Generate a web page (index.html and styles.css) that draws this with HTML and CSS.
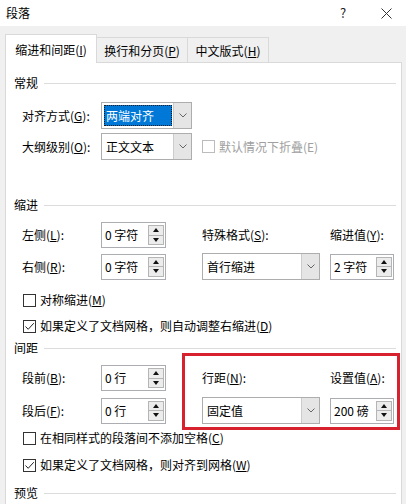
FILE: index.html
```html
<!DOCTYPE html>
<html lang="zh-CN">
<head>
<meta charset="utf-8">
<title>段落</title>
<link rel="stylesheet" href="styles.css">
</head>
<body>
<div class="page">
  <div class="titlebar">
    <span class="title">段落</span>
    <span class="help">?</span>
    <svg class="close" width="11" height="11" viewBox="0 0 11 11"><path d="M0.5 0.5 L10.5 10.5 M10.5 0.5 L0.5 10.5" stroke="#333" stroke-width="1" fill="none"/></svg>
  </div>

  <div class="tabs">
    <div class="tab active">缩进和间距(<u>I</u>)</div>
    <div class="tab tab2">换行和分页(<u>P</u>)</div>
    <div class="tab tab3">中文版式(<u>H</u>)</div>
  </div>

  <div class="panel">
    <div class="ghead first">常规</div>
    <div class="row r-first">
      <span>对齐方式(<u>G</u>):</span>
      <div class="combo w91">
        <div class="val sel">两端对齐</div>
        <div class="btn"><svg width="8" height="5" viewBox="0 0 8 5"><path d="M0.5 0.5 L4 4 L7.5 0.5" stroke="#666" fill="none"/></svg></div>
      </div>
    </div>
    <div class="row r-next">
      <span>大纲级别(<u>O</u>):</span>
      <div class="combo w91">
        <div class="val">正文文本</div>
        <div class="btn"><svg width="8" height="5" viewBox="0 0 8 5"><path d="M0.5 0.5 L4 4 L7.5 0.5" stroke="#666" fill="none"/></svg></div>
      </div>
      <div class="check disabled inline"><span class="box"></span>默认情况下折叠(E)</div>
    </div>

    <div class="ghead g2">缩进</div>
    <div class="row r-first">
      <span>左侧(<u>L</u>):</span>
      <div class="spin">0 字符
        <div class="arrows">
          <div class="ab"><svg width="6" height="4" viewBox="0 0 6 4"><path d="M3 0 L6 4 L0 4 Z" fill="#111"/></svg></div>
          <div class="ab"><svg width="6" height="4" viewBox="0 0 6 4"><path d="M0 0 L6 0 L3 4 Z" fill="#111"/></svg></div>
        </div>
      </div>
      <span>特殊格式(<u>S</u>):</span>
      <span>缩进值(<u>Y</u>):</span>
    </div>
    <div class="row r-next">
      <span>右侧(<u>R</u>):</span>
      <div class="spin">0 字符
        <div class="arrows">
          <div class="ab"><svg width="6" height="4" viewBox="0 0 6 4"><path d="M3 0 L6 4 L0 4 Z" fill="#111"/></svg></div>
          <div class="ab"><svg width="6" height="4" viewBox="0 0 6 4"><path d="M0 0 L6 0 L3 4 Z" fill="#111"/></svg></div>
        </div>
      </div>
      <div class="combo w118">
        <div class="val">首行缩进</div>
        <div class="btn"><svg width="8" height="5" viewBox="0 0 8 5"><path d="M0.5 0.5 L4 4 L7.5 0.5" stroke="#666" fill="none"/></svg></div>
      </div>
      <div class="spin w64">2 字符
        <div class="arrows">
          <div class="ab"><svg width="6" height="4" viewBox="0 0 6 4"><path d="M3 0 L6 4 L0 4 Z" fill="#111"/></svg></div>
          <div class="ab"><svg width="6" height="4" viewBox="0 0 6 4"><path d="M0 0 L6 0 L3 4 Z" fill="#111"/></svg></div>
        </div>
      </div>
    </div>
    <div class="check c-first"><span class="box"></span>对称缩进(<u>M</u>)</div>
    <div class="check c-next"><span class="box"><svg width="11" height="11" viewBox="0 0 11 11"><path d="M1.5 5.5 L4.2 8.3 L9.8 2.2" stroke="#222" stroke-width="1" fill="none"/></svg></span>如果定义了文档网格，则自动调整右缩进(<u>D</u>)</div>

    <div class="ghead g3">间距</div>
    <div class="row r-first">
      <span>段前(<u>B</u>):</span>
      <div class="spin">0 行
        <div class="arrows">
          <div class="ab"><svg width="6" height="4" viewBox="0 0 6 4"><path d="M3 0 L6 4 L0 4 Z" fill="#111"/></svg></div>
          <div class="ab"><svg width="6" height="4" viewBox="0 0 6 4"><path d="M0 0 L6 0 L3 4 Z" fill="#111"/></svg></div>
        </div>
      </div>
      <span>行距(<u>N</u>):</span>
      <span>设置值(<u>A</u>):</span>
    </div>
    <div class="row r-next3">
      <span>段后(<u>F</u>):</span>
      <div class="spin">0 行
        <div class="arrows">
          <div class="ab"><svg width="6" height="4" viewBox="0 0 6 4"><path d="M3 0 L6 4 L0 4 Z" fill="#111"/></svg></div>
          <div class="ab"><svg width="6" height="4" viewBox="0 0 6 4"><path d="M0 0 L6 0 L3 4 Z" fill="#111"/></svg></div>
        </div>
      </div>
      <div class="combo w118">
        <div class="val">固定值</div>
        <div class="btn"><svg width="8" height="5" viewBox="0 0 8 5"><path d="M0.5 0.5 L4 4 L7.5 0.5" stroke="#666" fill="none"/></svg></div>
      </div>
      <div class="spin w64">200 磅
        <div class="arrows">
          <div class="ab"><svg width="6" height="4" viewBox="0 0 6 4"><path d="M3 0 L6 4 L0 4 Z" fill="#111"/></svg></div>
          <div class="ab"><svg width="6" height="4" viewBox="0 0 6 4"><path d="M0 0 L6 0 L3 4 Z" fill="#111"/></svg></div>
        </div>
      </div>
    </div>
    <div class="check c-first3"><span class="box"></span>在相同样式的段落间不添加空格(<u>C</u>)</div>
    <div class="check c-next3"><span class="box"><svg width="11" height="11" viewBox="0 0 11 11"><path d="M1.5 5.5 L4.2 8.3 L9.8 2.2" stroke="#222" stroke-width="1" fill="none"/></svg></span>如果定义了文档网格，则对齐到网格(<u>W</u>)</div>

    <div class="ghead g4">预览</div>
  </div>

  <div class="highlight"></div>
</div>
</body>
</html>
```

FILE: styles.css
```css
html, body {
  margin: 0;
  padding: 0;
}

.page {
  position: relative;
  width: 406px;
  height: 504px;
  overflow: hidden;
  background: #f0f0f0;
  font-family: "Noto Sans CJK SC", "Noto Sans", sans-serif;
  font-size: 12px;
  line-height: 16px;
  color: #000;
}

u {
  text-decoration: underline;
  text-underline-offset: 1px;
}

/* title bar */
.titlebar {
  height: 26px;
  background: #fff;
  display: flex;
  align-items: center;
  padding-left: 6px;
}

.title {
  flex: 1;
  font-size: 12px;
}

.help {
  width: 12px;
  text-align: center;
  font-size: 13px;
  color: #222;
  margin-right: 32px;
}

.close {
  margin-right: 14px;
}

/* tabs */
.tabs {
  display: flex;
  align-items: flex-end;
  height: 28px;
  margin-top: 8px;
  padding-left: 5px;
}

.tab {
  box-sizing: border-box;
  height: 25px;
  border: 1px solid #d9d9d9;
  border-bottom: none;
  background: #f0f0f0;
  display: flex;
  align-items: center;
  justify-content: center;
  padding-top: 1px;
}

.tab.active {
  position: relative;
  z-index: 1;
  width: 92px;
  height: 29px;
  margin-bottom: -1px;
  background: #fff;
  padding-top: 2px;
}

.tab2 {
  width: 92px;
  margin-left: -1px;
}

.tab3 {
  width: 82px;
  margin-left: -1px;
}

/* panel */
.panel {
  margin: 0 4px 0 5px;
  height: 460px;
  background: #fff;
  border: 1px solid #d9d9d9;
  padding: 0 5px 0 8px;
}

.ghead {
  display: flex;
  align-items: center;
  height: 14px;
  line-height: 14px;
}

.ghead::after {
  content: "";
  flex: 1;
  height: 1px;
  background: #dcdcdc;
  margin-left: 6px;
}

.ghead.first { margin-top: 13px; }
.ghead.g2 { margin-top: 39px; }
.ghead.g3 { margin-top: 7px; }
.ghead.g4 { margin-top: 13px; }

.row {
  display: grid;
  grid-template-columns: 79px 101px 128px 64px;
  align-items: center;
  height: 26px;
  margin-left: 8px;
}

.row.r-first { margin-top: 10px; }
.ghead.first + .row.r-first { margin-top: 12px; }
.row.r-next { margin-top: 5px; }
.row.r-next3 { margin-top: 6px; }

/* combo box */
.combo {
  box-sizing: border-box;
  display: flex;
  height: 27px;
  border: 1px solid #adadad;
  background: #fff;
}

.combo.w91 { width: 91px; }
.combo.w118 { width: 118px; }

.combo .val {
  flex: 1;
  display: flex;
  align-items: center;
  padding-left: 4px;
}

.combo .val.sel {
  margin: 2px 1px 2px 2px;
  padding-left: 2px;
  background: #0078d7;
  color: #fff;
  outline: 1px dotted #1a1a1a;
  outline-offset: -1px;
}

.combo .btn {
  width: 17px;
  background: #e5e5e5;
  border-left: 1px solid #cccccc;
  display: flex;
  align-items: center;
  justify-content: center;
}

/* spin box */
.spin {
  box-sizing: border-box;
  width: 65px;
  height: 26px;
  border: 1px solid #abadb3;
  background: #fff;
  display: flex;
  align-items: center;
  padding-left: 3px;
}

.spin.w64 { width: 64px; }

.arrows {
  margin-left: auto;
  margin-right: 1px;
  width: 16px;
  height: 20px;
  display: flex;
  flex-direction: column;
}

.ab {
  flex: 1;
  box-sizing: border-box;
  border: 1px solid #b5b5b5;
  background: #ececec;
  display: flex;
  align-items: center;
  justify-content: center;
}

.ab + .ab {
  margin-top: -1px;
}

/* check boxes */
.check {
  display: flex;
  align-items: center;
  height: 16px;
  margin-left: 9px;
}

.check.inline {
  margin-left: 0;
}

.check .box {
  box-sizing: border-box;
  width: 13px;
  height: 13px;
  border: 1px solid #333;
  background: #fff;
  margin-right: 4px;
  display: flex;
  align-items: center;
  justify-content: center;
}

.check.disabled {
  color: #a0a0a0;
}

.check.disabled .box {
  border-color: #bcbcbc;
}

.check.c-first { margin-top: 13px; }
.check.c-next { margin-top: 10px; }
.check.c-first3 { margin-top: 7px; }
.check.c-next3 { margin-top: 11px; }

/* annotation */
.highlight {
  position: absolute;
  left: 182px;
  top: 353px;
  width: 218px;
  height: 77px;
  box-sizing: border-box;
  border: 3px solid #d7212e;
}
```
